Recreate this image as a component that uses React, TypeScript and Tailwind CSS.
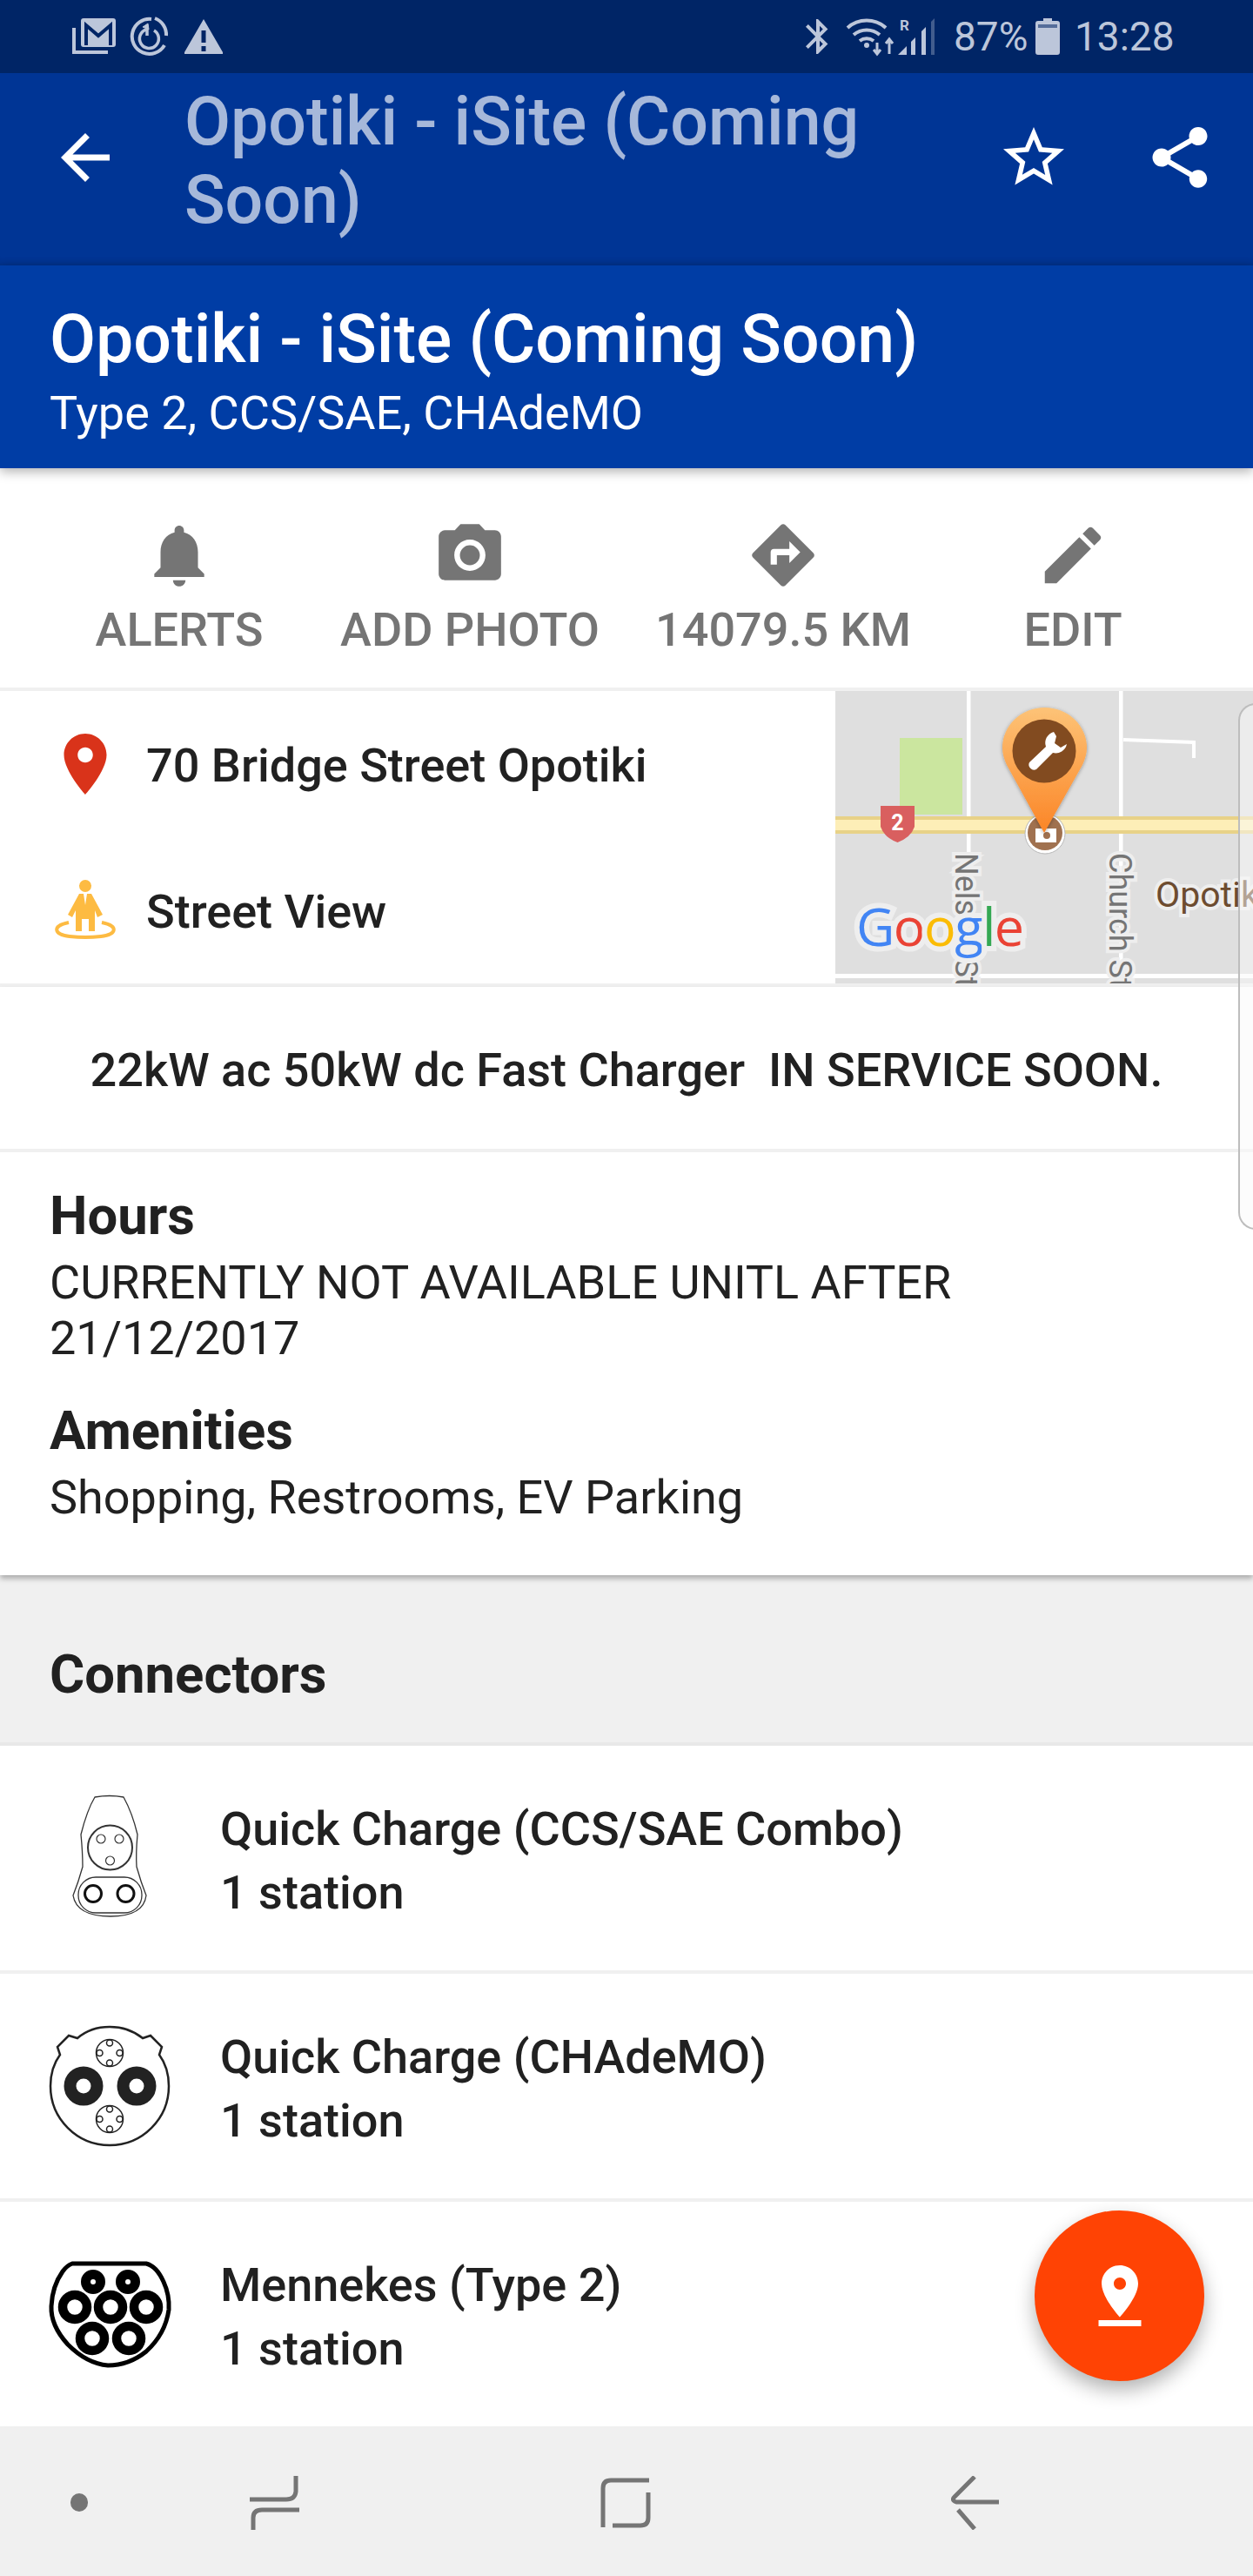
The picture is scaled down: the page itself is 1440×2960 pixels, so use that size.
import React from "react";

const ROBOTO = "font-['Roboto',sans-serif]";

function MdIcon({ d, size, className }: { d: string; size: number; className?: string }) {
  return (
    <svg viewBox="0 0 24 24" width={size} height={size} className={className} fill="currentColor">
      <path d={d} />
    </svg>
  );
}

const ICONS = {
  back: "M20 11H7.83l5.59-5.59L12 4l-8 8 8 8 1.41-1.41L7.83 13H20v-2z",
  star: "M22 9.24l-7.19-.62L12 2 9.19 8.63 2 9.24l5.46 4.73L5.82 21 12 17.27 18.18 21l-1.63-7.03L22 9.24zM12 15.4l-3.76 2.27 1-4.28-3.32-2.88 4.38-.38L12 6.1l1.71 4.04 4.38.38-3.32 2.88 1 4.28L12 15.4z",
  share:
    "M18 16.08c-.76 0-1.44.3-1.96.77L8.91 12.7c.05-.23.09-.46.09-.7s-.04-.47-.09-.7l7.05-4.11c.54.5 1.25.81 2.04.81 1.66 0 3-1.34 3-3s-1.34-3-3-3-3 1.34-3 3c0 .24.04.47.09.7L8.04 9.81C7.5 9.31 6.79 9 6 9c-1.66 0-3 1.34-3 3s1.34 3 3 3c.79 0 1.5-.31 2.04-.81l7.12 4.16c-.05.21-.08.43-.08.65 0 1.61 1.31 2.92 2.92 2.92 1.61 0 2.92-1.31 2.92-2.92s-1.31-2.92-2.92-2.92z",
  bell: "M12 22c1.1 0 2-.9 2-2h-4c0 1.1.89 2 2 2zm6-6v-5c0-3.07-1.64-5.64-4.5-6.32V4c0-.83-.67-1.5-1.5-1.5s-1.5.67-1.5 1.5v.68C7.63 5.36 6 7.92 6 11v5l-2 2v1h16v-1l-2-2z",
  camera:
    "M12 8.8a3.2 3.2 0 1 0 0 6.4 3.2 3.2 0 0 0 0-6.4zM9 2L7.17 4H4c-1.1 0-2 .9-2 2v12c0 1.1.9 2 2 2h16c1.1 0 2-.9 2-2V6c0-1.1-.9-2-2-2h-3.17L15 2H9zm3 15c-2.76 0-5-2.24-5-5s2.24-5 5-5 5 2.24 5 5-2.24 5-5 5z",
  directions:
    "M21.71 11.29l-9-9c-.39-.39-1.02-.39-1.41 0l-9 9c-.39.39-.39 1.02 0 1.41l9 9c.39.39 1.02.39 1.41 0l9-9c.39-.38.39-1.01 0-1.41zM14 14.5V12h-4v3H8v-4c0-.55.45-1 1-1h5V7.5l3.5 3.5-3.5 3.5z",
  edit: "M3 17.25V21h3.75L17.81 9.94l-3.75-3.75L3 17.25zM20.71 7.04c.39-.39.39-1.02 0-1.41l-2.34-2.34c-.39-.39-1.02-.39-1.41 0l-1.83 1.83 3.75 3.75 1.83-1.83z",
  place:
    "M12 2C8.13 2 5 5.13 5 9c0 5.25 7 13 7 13s7-7.75 7-13c0-3.87-3.13-7-7-7zm0 9.5c-1.38 0-2.5-1.12-2.5-2.5s1.12-2.5 2.5-2.5 2.5 1.12 2.5 2.5-1.12 2.5-2.5 2.5z",
  pinDrop:
    "M18 8c0-3.31-2.69-6-6-6S6 4.69 6 8c0 4.5 6 11 6 11s6-6.5 6-11zm-8 0c0-1.1.9-2 2-2s2 .9 2 2-.9 2-2 2-2-.9-2-2zM5 20v2h14v-2H5z",
  bluetooth:
    "M17.71 7.71L12 2h-1v7.59L6.41 5 5 6.41 10.59 12 5 17.59 6.41 19 11 14.41V22h1l5.71-5.71-4.3-4.29 4.3-4.29zM13 5.83l1.88 1.88L13 9.59V5.83zm1.88 10.46L13 18.17v-3.76l1.88 1.88z",
};

function StatusBar() {
  return (
    <div className="h-[84px] bg-[#002566] text-[#bcc6da] flex items-center shrink-0 pb-[1px]">
      {/* notification icons */}
      <svg width="50" height="42" viewBox="0 0 50 42" className="ml-[83px]">
        <rect x="10" y="0" width="40" height="33" rx="3" fill="currentColor" />
        <path d="M16 31V8l14 12L44 8v23" fill="none" stroke="#002566" strokeWidth="4" />
        <path d="M2 11v28h39" fill="none" stroke="currentColor" strokeWidth="4" />
      </svg>
      <svg width="46" height="46" viewBox="0 0 46 46" className="ml-[15px]" fill="none" stroke="currentColor">
        <path d="M26 3A20 20 0 1 0 41 33" strokeWidth="4" />
        <path d="M30 2A20 20 0 0 1 43 22" strokeWidth="4" />
        <path d="M20 15a11 11 0 1 0 9 1" strokeWidth="3.5" />
        <path d="M21 22V10" strokeWidth="3.5" />
        <path d="M16 12l6-4 1 7z" fill="currentColor" strokeWidth="1" />
      </svg>
      <svg width="44" height="40" viewBox="0 0 44 40" className="ml-[18px]">
        <path
          d="M22 0L44 38v2H0v-2zM19.500 13v14h5V13zm0 18v6h5v-6z"
          fill="currentColor"
          fillRule="evenodd"
        />
      </svg>

      {/* system icons */}
      <MdIcon d={ICONS.bluetooth} size={48} className="ml-[660px] -mr-[4px]" />
      <svg width="56" height="46" viewBox="0 0 56 46" className="ml-[12px]" fill="none" stroke="currentColor">
        <path d="M2 13a33 33 0 0 1 44 0" strokeWidth="4" />
        <path d="M9 21a23 23 0 0 1 30 0" strokeWidth="4" />
        <path d="M16 28a13 13 0 0 1 16 0" strokeWidth="4" />
        <circle cx="24" cy="33" r="3" fill="currentColor" stroke="none" />
        <path d="M36 30v12M32 38l4 5 4-5" strokeWidth="3" />
        <path d="M50 43V26M46 31l4-5 4 5" strokeWidth="3" />
      </svg>
      <svg width="44" height="44" viewBox="0 0 44 44" className="ml-[4px]">
        <text x="2" y="15" fontSize="17" fontWeight="700" fill="currentColor" fontFamily="Roboto, sans-serif">
          R
        </text>
        <path d="M0 43l10-10v10z" fill="currentColor" />
        <path d="M15 43V28l5-5v20z" fill="currentColor" />
        <path d="M27 43V16l5-5v32z" fill="currentColor" />
        <path d="M38 43V5l4-4v42z" fill="currentColor" opacity="0.35" />
      </svg>
      <span className={`${ROBOTO} text-[46px] leading-none w-[82px] ml-[20px] whitespace-nowrap`}>87%</span>
      <svg width="28" height="42" viewBox="0 0 28 42" className="ml-[12px]">
        <path
          d="M9 0h10v3h6a3 3 0 0 1 3 3v33a3 3 0 0 1-3 3H3a3 3 0 0 1-3-3V6a3 3 0 0 1 3-3h6z"
          fill="currentColor"
        />
        <rect x="3" y="7" width="22" height="4" fill="#002566" opacity="0.55" />
      </svg>
      <span className={`${ROBOTO} text-[46px] leading-none ml-[17px]`}>13:28</span>
    </div>
  );
}

function AppBar() {
  return (
    <div className="h-[221px] bg-[#003595] flex shrink-0 relative text-white shadow-[inset_0_-10px_8px_-8px_rgba(0,0,0,0.12)]">
      <div className="w-[212px] flex items-center pl-[56px] pb-[27px]">
        <MdIcon d={ICONS.back} size={84} />
      </div>
      <div className={`${ROBOTO} w-[820px] pt-[11px] text-[77px] leading-[90px] font-medium text-white/65`}>
        Opotiki - iSite (Coming Soon)
      </div>
      <div className="flex-1 flex items-center pb-[27px] pl-[114px]">
        <MdIcon d={ICONS.star} size={84} />
        <MdIcon d={ICONS.share} size={84} className="ml-[84px]" />
      </div>
    </div>
  );
}

function Header() {
  return (
    <div className={`${ROBOTO} h-[233px] bg-[#003da5] text-white shrink-0 pl-[57px] pt-[40px] relative z-10 shadow-[0_4px_12px_rgba(0,0,0,0.3)]`}>
      <div className="text-[77px] leading-[90px] font-medium">Opotiki - iSite (Coming Soon)</div>
      <div className="text-[54px] leading-[64px] mt-[8px]">Type 2, CCS/SAE, CHAdeMO</div>
    </div>
  );
}

function ActionItem({ icon, label, width }: { icon: string; label: string; width: string }) {
  return (
    <div className={`${width} flex flex-col items-center`}>
      <MdIcon d={icon} size={86} className="text-[#757575]" />
      <span className={`${ROBOTO} text-[54px] leading-[60px] font-medium text-[#757575] mt-[13px] whitespace-nowrap`}>
        {label}
      </span>
    </div>
  );
}

function Actions() {
  return (
    <div className="h-[252px] bg-white shrink-0 flex pl-[56px] pt-[57px]">
      <ActionItem icon={ICONS.bell} label="ALERTS" width="w-[300px]" />
      <ActionItem icon={ICONS.camera} label="ADD PHOTO" width="w-[368px]" />
      <ActionItem icon={ICONS.directions} label="14079.5 KM" width="w-[352px]" />
      <ActionItem icon={ICONS.edit} label="EDIT" width="w-[314px]" />
    </div>
  );
}

function Divider() {
  return <div className="h-[4px] bg-[#f0f0f0] shrink-0" />;
}

function StreetViewIcon() {
  return (
    <svg width="96" height="96" viewBox="0 0 96 96" fill="none" className="mt-[4px]">
      <path
        d="M29 60C9 64 12 74 30 76Q48 78 66 76C84 74 87 64 67 60"
        stroke="#fdbb42"
        strokeWidth="4"
      />
      <circle cx="48" cy="18" r="7" fill="#fdbb42" />
      <path
        d="M41 27L46 27L48 40L50 27L55 27L68 51L62 54L59 46L59 70L52 70L52 56L44 56L44 70L37 70L37 46L33 54L28 51Z"
        fill="#fdbb42"
      />
    </svg>
  );
}

function MapThumb() {
  const halo = { paintOrder: "stroke" as const };
  return (
    <svg viewBox="0 0 480 336" width="480" height="336" className="shrink-0">
      <defs>
        <linearGradient id="pin" x1="0" y1="0" x2="0" y2="1">
          <stop offset="0" stopColor="#fdc377" />
          <stop offset="1" stopColor="#fb8526" />
        </linearGradient>
        <filter id="pinShadow" x="-20%" y="-20%" width="140%" height="140%">
          <feDropShadow dx="0" dy="1" stdDeviation="2" floodColor="#000" floodOpacity="0.35" />
        </filter>
      </defs>
      <rect width="480" height="336" fill="#dfdfdf" />
      <rect x="74" y="54" width="72" height="88" fill="#cbe69f" />
      <rect x="151" y="0" width="4.500" height="336" fill="#fff" />
      <rect x="326" y="0" width="4.500" height="336" fill="#fff" />
      <path d="M331 56l81 3v18" stroke="#fff" strokeWidth="4" fill="none" />
      <rect y="325" width="480" height="5" fill="#fff" />
      <rect y="144" width="480" height="20" fill="#e8d288" />
      <rect y="148" width="480" height="12" fill="#fdeeb7" />

      <path d="M52 132h39v24q-4 12-19.500 18Q56 168 52 156z" fill="#d95f5f" />
      <text x="71.500" y="160" textAnchor="middle" fontFamily="Roboto, sans-serif" fontWeight="700" fontSize="25" fill="#fff">
        2
      </text>

      <text transform="translate(138 186) rotate(90)" fontFamily="Roboto, sans-serif" fontSize="36" fill="#757575" stroke="#eeeeee" strokeWidth="8" style={halo}>
        Nelson St
      </text>
      <text transform="translate(315 186) rotate(90)" fontFamily="Roboto, sans-serif" fontSize="36" fill="#757575" stroke="#eeeeee" strokeWidth="8" style={halo}>
        Church St
      </text>
      <text x="368" y="248" fontFamily="Roboto, sans-serif" fontSize="41" fill="#6d4c30" stroke="#eeeeee" strokeWidth="8" style={halo}>
        Opotiki
      </text>

      {/* Google mark, drawn as live text */}
      <text x="24" y="293" fontFamily="'Open Sans', sans-serif" fontWeight="500" fontSize="61" letterSpacing="-1.500" stroke="#eeeeee" strokeWidth="12" style={halo}>
        <tspan fill="#4285f4">G</tspan>
        <tspan fill="#ea4335">o</tspan>
        <tspan fill="#fbbc05">o</tspan>
        <tspan fill="#4285f4">g</tspan>
        <tspan fill="#34a853">l</tspan>
        <tspan fill="#ea4335">e</tspan>
      </text>

      {/* camera marker under the pin */}
      <circle cx="241" cy="164" r="23" fill="#ffffff" stroke="#b9b9b9" strokeWidth="1" />
      <circle cx="241" cy="163" r="20" fill="#a0714f" />
      <rect x="230" y="158" width="24" height="16" fill="#fff" />
      <circle cx="243" cy="166" r="4" fill="#a0714f" />

      <path
        d="M240 163 L197 85 Q192 74 192 65 A48.500 46 0 0 1 289 65 Q289 74 284 85 Z"
        fill="url(#pin)"
        filter="url(#pinShadow)"
      />
      <circle cx="240" cy="69" r="36.500" fill="#824b20" />
      <path
        d="M251 47a13 13 0 0 0-9 17L223 82a6 6 0 0 0 8 8l19-19a13 13 0 0 0 16-10l-7 4-7-5 2-8z"
        fill="#fff"
      />
    </svg>
  );
}

function Location() {
  return (
    <div className="h-[336px] flex shrink-0 bg-white">
      <div className="w-[960px] flex flex-col">
        <div className="h-[168px] flex items-center">
          <div className="w-[168px] flex justify-center pl-[28px]">
            <MdIcon d={ICONS.place} size={84} className="text-[#d9331a]" />
          </div>
          <span className={`${ROBOTO} text-[54px] font-medium text-[#212121] pt-[3px]`}>70 Bridge Street Opotiki</span>
        </div>
        <div className="h-[168px] flex items-center">
          <div className="w-[168px] flex justify-center pl-[28px]">
            <StreetViewIcon />
          </div>
          <span className={`${ROBOTO} text-[54px] font-medium text-[#212121] pt-[3px]`}>Street View</span>
        </div>
      </div>
      <MapThumb />
    </div>
  );
}

function Details() {
  return (
    <div className={`${ROBOTO} bg-white text-[#212121] shrink-0 relative z-10 shadow-[0_4px_6px_rgba(0,0,0,0.28)]`}>
      <div className="h-[186px] flex items-center justify-center text-[54px] font-medium whitespace-pre pt-[4px]">
        22kW ac 50kW dc Fast Charger  IN SERVICE SOON.
      </div>
      <Divider />
      <div className="h-[486px] px-[57px] pt-[38px]">
        <div className="text-[61.6px] leading-[70px] font-bold">Hours</div>
        <div className="text-[54px] leading-[64px] mt-[10px] w-[1200px]">
          CURRENTLY NOT AVAILABLE UNITL AFTER 21/12/2017
        </div>
        <div className="text-[61.6px] leading-[70px] font-bold mt-[39px]">Amenities</div>
        <div className="text-[54px] leading-[64px] mt-[10px]">Shopping, Restrooms, EV Parking</div>
      </div>
    </div>
  );
}

function CcsIcon() {
  return (
    <svg viewBox="0 0 180 200" width="180" height="200" fill="none" stroke="#333">
      <path
        d="M69 27Q86 24 102 27Q112 45 118 70Q116 92 117 107Q122 125 128 140Q125 164 87 164Q48 164 44 140Q50 125 55 107Q55 90 53 70Q60 42 69 27Z"
        strokeWidth="1.300"
      />
      <circle cx="86.500" cy="85" r="25.500" strokeWidth="2" />
      <circle cx="76" cy="75" r="5" strokeWidth="1.200" />
      <circle cx="97" cy="75" r="5" strokeWidth="1.200" />
      <circle cx="86.500" cy="100" r="5" strokeWidth="1.200" />
      <rect x="50" y="119" width="73" height="41" rx="20" strokeWidth="1.300" />
      <circle cx="67" cy="138" r="9.500" strokeWidth="3" stroke="#111" />
      <circle cx="104.500" cy="138" r="9.500" strokeWidth="3" stroke="#111" />
    </svg>
  );
}

function ChademoPins({ cx, cy }: { cx: number; cy: number }) {
  const pins = [-90, 0, 90, 180];
  return (
    <g fill="none" stroke="#222" strokeWidth="1.500">
      <circle cx={cx} cy={cy} r="15.500" />
      {pins.map((a) => (
        <circle
          key={a}
          cx={cx + 11.5 * Math.cos((a * Math.PI) / 180)}
          cy={cy + 11.5 * Math.sin((a * Math.PI) / 180)}
          r="3.500"
        />
      ))}
    </g>
  );
}

function ChademoIcon() {
  return (
    <svg viewBox="0 0 180 180" width="180" height="180" fill="none">
      <path
        d="M49 32Q64 19 86 19Q108 19 124 32L133 29L146 42L143 51Q154 66 154 87A68 68 0 0 1 18 87Q18 66 29 51L26 42L39 29Z"
        stroke="#222"
        strokeWidth="2.500"
      />
      <circle cx="56" cy="87" r="15.500" stroke="#222" strokeWidth="14" />
      <circle cx="117" cy="87" r="15.500" stroke="#222" strokeWidth="14" />
      <ChademoPins cx={86} cy={49} />
      <ChademoPins cx={86} cy={125} />
    </svg>
  );
}

function Type2Icon() {
  return (
    <svg viewBox="0 0 180 180" width="180" height="180" fill="none" stroke="#000">
      <path d="M43 29H128Q140 32 148 50Q155 65 154 82Q150 110 128 130Q108 146 84 146Q60 144 38 122Q18 100 19 78Q20 55 32 38Q37 31 43 29Z" strokeWidth="5" />
      <circle cx="67" cy="50" r="8.500" strokeWidth="11" />
      <circle cx="107" cy="50" r="8.500" strokeWidth="11" />
      <circle cx="46" cy="79" r="14" strokeWidth="10.500" />
      <circle cx="87" cy="79" r="14" strokeWidth="10.500" />
      <circle cx="128" cy="79" r="14" strokeWidth="10.500" />
      <circle cx="66" cy="115" r="14" strokeWidth="10.500" />
      <circle cx="108" cy="115" r="14" strokeWidth="10.500" />
    </svg>
  );
}

function ConnectorRow({ icon, title }: { icon: React.ReactNode; title: string }) {
  return (
    <div className="h-[258px] bg-white flex items-center shrink-0 pt-[6px]">
      <div className="w-[253px] shrink-0 pl-[40px]">{icon}</div>
      <div className={`${ROBOTO} text-[54px] leading-[73px] font-medium text-[#212121]`}>
        <div>{title}</div>
        <div>1 station</div>
      </div>
    </div>
  );
}

function NavBar() {
  return (
    <div className="h-[172px] bg-[#f0f0f0] shrink-0 flex items-center pl-[81px] pt-[3px] text-[#757575]">
      <div className="w-[20px] h-[21px] rounded-full bg-[#757575]" />
      <svg width="58" height="62" viewBox="0 0 58 62" fill="none" stroke="currentColor" strokeWidth="5" className="ml-[186px]">
        <path d="M0 27H42Q52 27 53 18V0" />
        <path d="M57 39H14Q4 39 4 48V62" />
      </svg>
      <svg width="58" height="60" viewBox="0 0 58 60" fill="none" stroke="currentColor" strokeWidth="5" className="ml-[345px]">
        <path d="M56 4H12Q3 4 3 13V58" />
        <path d="M14 56H46Q55 56 55 47V18" />
      </svg>
      <svg width="56" height="62" viewBox="0 0 56 62" fill="none" stroke="currentColor" strokeWidth="5" className="ml-[345px]">
        <path d="M27 1L4 24Q0 28 6 30H55" />
        <path d="M8 39L27 61" />
      </svg>
    </div>
  );
}

export default function App() {
  return (
    <div className="w-[1440px] h-[2960px] bg-white flex flex-col overflow-hidden relative">
      <StatusBar />
      <AppBar />
      <Header />
      <Actions />
      <Divider />
      <Location />
      <Divider />
      <Details />
      <div className={`${ROBOTO} h-[192px] bg-[#f0f0f0] shrink-0 flex items-center pl-[57px] pt-[36px] text-[61.6px] font-bold text-[#212121]`}>
        Connectors
      </div>
      <div className="h-[4px] bg-[#e8e8e8] shrink-0" />
      <ConnectorRow icon={<CcsIcon />} title="Quick Charge (CCS/SAE Combo)" />
      <Divider />
      <ConnectorRow icon={<ChademoIcon />} title="Quick Charge (CHAdeMO)" />
      <Divider />
      <ConnectorRow icon={<Type2Icon />} title="Mennekes (Type 2)" />
      <NavBar />

      {/* edge panel handle */}
      <div className="absolute left-[1423px] top-[808px] w-[40px] h-[605px] rounded-l-[20px] border-l-2 border-y-2 border-[#bdbdbd] bg-[#fafafa]/50 z-20" />

      {/* floating button */}
      <div className="absolute left-[1189px] top-[2540px] w-[195px] h-[196px] rounded-full bg-[#ff4304] flex items-center justify-center text-white z-20 shadow-[0_10px_22px_rgba(0,0,0,0.3)]">
        <MdIcon d={ICONS.pinDrop} size={84} />
      </div>
    </div>
  );
}
